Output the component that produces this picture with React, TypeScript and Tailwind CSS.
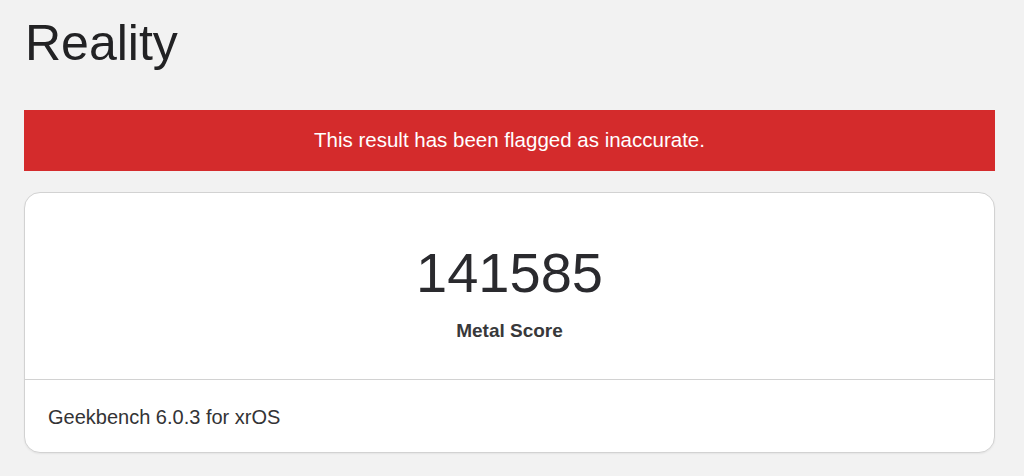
import React from "react";

export default function App() {
  return (
    <div
      className="min-h-screen bg-[#f2f2f2] pl-[24px] pr-[29px] pt-[18px] pb-[22px]"
      style={{ fontFamily: '"Liberation Sans", Arial, sans-serif' }}
    >
      <h1 className="text-[50px] leading-[50px] text-[#222224] pl-[1px]">Reality</h1>

      <div className="mt-[42px] h-[61px] bg-[#d42b2c] flex items-center justify-center">
        <span className="text-[20.5px] text-white">This result has been flagged as inaccurate.</span>
      </div>

      <div className="mt-[21px] bg-white border border-[#d2d2d2] rounded-[16px] shadow-[0_1px_2px_rgba(0,0,0,0.06)] overflow-hidden">
        <div className="flex flex-col items-center pt-[52px] pb-[39px]">
          <div className="text-[56px] leading-[56px] text-[#2a2a2e]">141585</div>
          <div className="mt-[20px] text-[19px] leading-[19px] font-semibold text-[#38383a]">Metal Score</div>
        </div>
        <div className="border-t border-[#d2d2d2] px-[23px] pt-[27px] pb-[25px]">
          <div className="text-[20px] leading-[20px] text-[#333335]">Geekbench 6.0.3 for xrOS</div>
        </div>
      </div>
    </div>
  );
}
